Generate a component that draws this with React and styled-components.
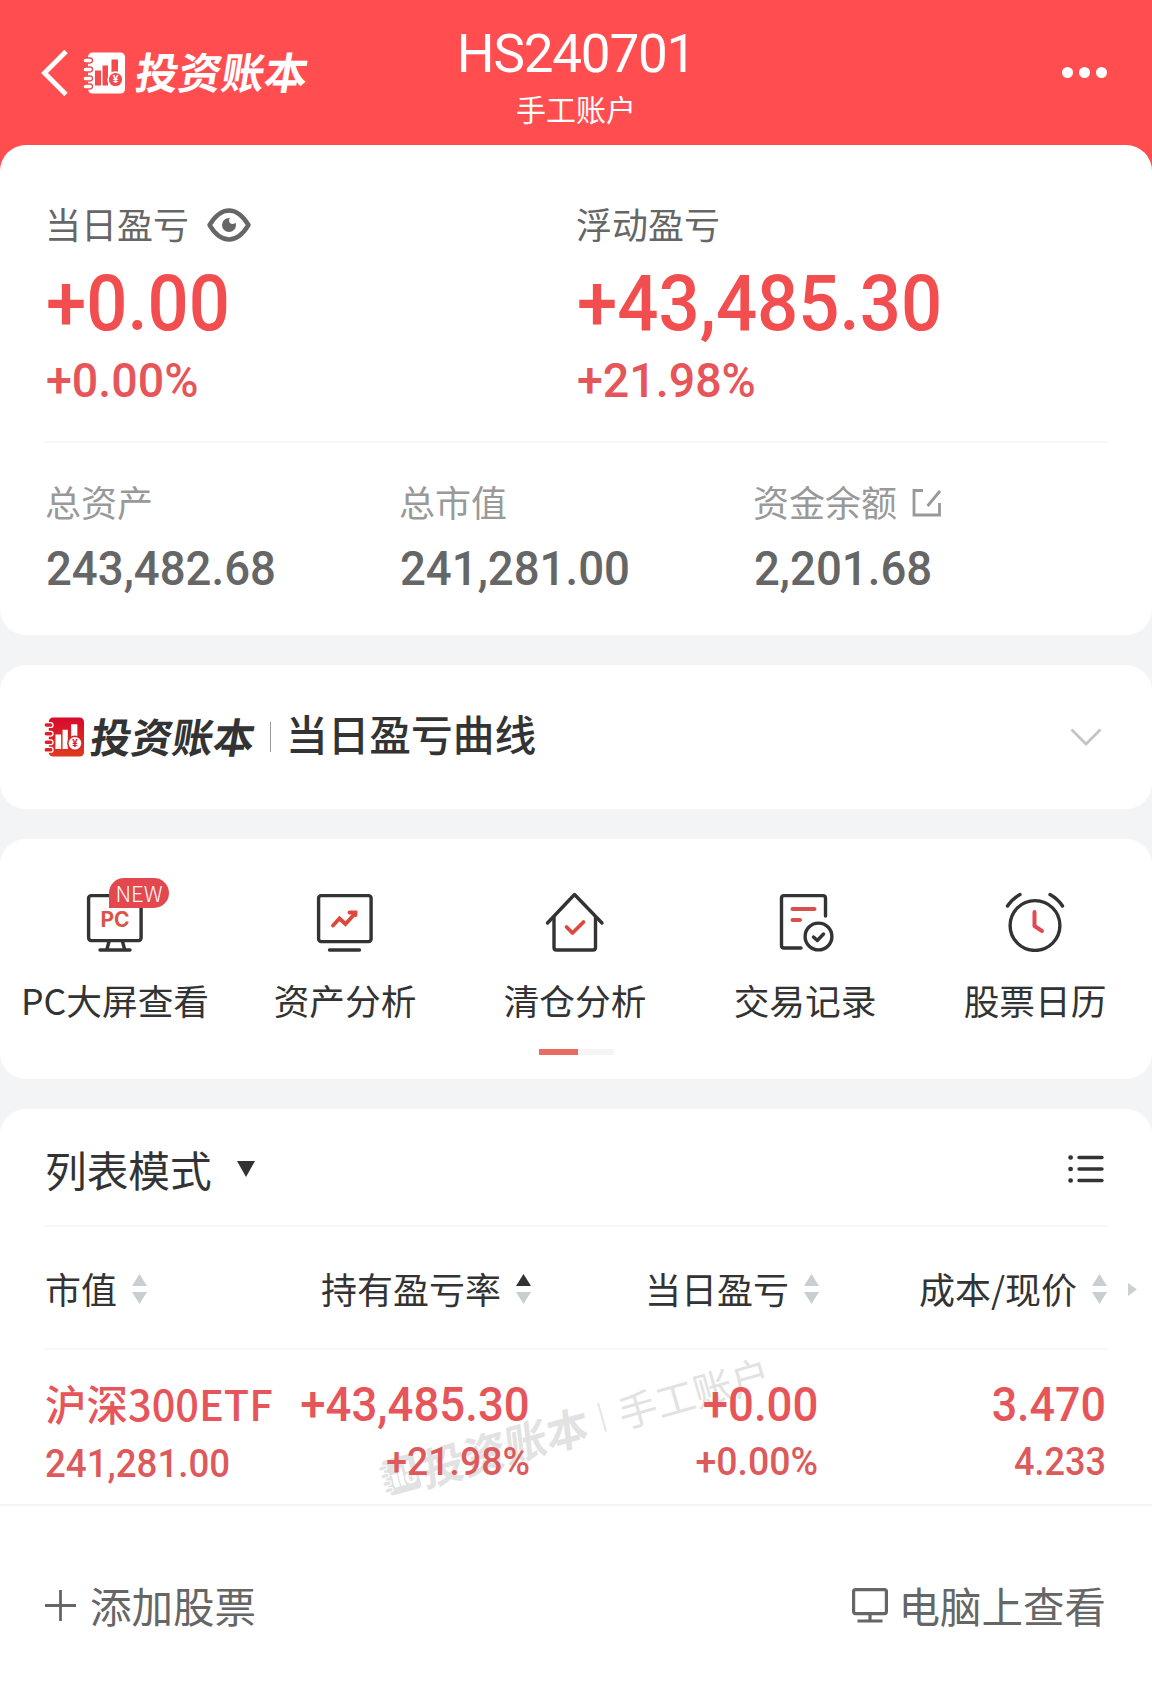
import React, { useState } from 'react'
import styled, { createGlobalStyle, css } from 'styled-components'

const cjk = `'Noto Sans CJK SC', 'Noto Sans', sans-serif`

const entries = [
  { label: 'PC大屏查看', icon: 'pc', badge: 'NEW' },
  { label: '资产分析', icon: 'asset' },
  { label: '清仓分析', icon: 'house' },
  { label: '交易记录', icon: 'record' },
  { label: '股票日历', icon: 'clock' },
]

const columns = [
  { key: 'value', label: '市值' },
  { key: 'rate', label: '持有盈亏率', sorted: 'up' },
  { key: 'today', label: '当日盈亏' },
  { key: 'cost', label: '成本/现价' },
]

const sums = [
  { label: '总资产', value: '243,482.68' },
  { label: '总市值', value: '241,281.00' },
  { label: '资金余额', value: '2,201.68', editable: true },
]

const LogoMark = ({ size, color, paper, gradient }) => (
  <svg width={size} height={size} viewBox="0 0 42 41" fill="none">
    {gradient && (
      <defs>
        <linearGradient id="mark" x1="0" y1="0" x2="0" y2="1">
          <stop offset="0" stopColor="#d80a2c" />
          <stop offset="1" stopColor="#df3a1e" />
        </linearGradient>
      </defs>
    )}
    <rect x="5" y="0" width="37" height="41" rx="4.5" fill={gradient ? 'url(#mark)' : color} />
    {[5.5, 14.5, 23.5, 31.5].map((y) => (
      <rect key={y} x="0" y={y} width="9.5" height="5" rx="2.4" fill={color} stroke={paper} strokeWidth="1.3" />
    ))}
    <path d="M12 18h6v15h-6zM19.5 13h5.5v20h-5.5zM28.5 7H35v14h-6.5z" fill={paper} />
    <circle cx="32.5" cy="27" r="8.2" fill={gradient ? '#db2626' : color} />
    <circle cx="32.5" cy="27" r="6.6" fill={paper} />
    <text x="32.5" y="30.8" fontSize="10.5" fontWeight="700" textAnchor="middle" fill={color} fontFamily="Roboto, sans-serif">¥</text>
  </svg>
)

const EntryIcon = ({ name }) => {
  switch (name) {
    case 'pc':
      return (
        <svg width="60" height="60" viewBox="0 0 60 60" fill="none" stroke="#333" strokeWidth="3.4" strokeLinecap="round">
          <rect x="3.6" y="3.6" width="52.5" height="45" rx="2.5" />
          <path d="M24 49.5L22 57M37.5 49.5L39.500 57M15 58H45" />
        </svg>
      )
    case 'asset':
      return (
        <svg width="60" height="60" viewBox="0 0 60 60" fill="none" stroke="#333" strokeWidth="3.4" strokeLinecap="round">
          <rect x="3.6" y="3.6" width="52.5" height="46" rx="2.5" />
          <path d="M14.5 58H44.5" />
          <path d="M18 33.500L24.500 26.500L30.500 32L40 21.500M34.500 20.500H40.500V23" stroke="#e0473c" strokeWidth="3.8" />
        </svg>
      )
    case 'house':
      return (
        <svg width="60" height="60" viewBox="0 0 60 60" fill="none" stroke="#333" strokeWidth="3.4" strokeLinecap="round" strokeLinejoin="round">
          <path d="M2.500 31L29.500 2.500L57 31" />
          <path d="M9 25.500V55.500Q9 58 11.500 58H48Q50.500 58 50.500 55.500V25.500" />
          <path d="M21.500 35L27.500 41L38.500 30" stroke="#e0473c" strokeWidth="3.8" />
        </svg>
      )
    case 'record':
      return (
        <svg width="60" height="60" viewBox="0 0 60 60" fill="none" stroke="#333" strokeWidth="3.4" strokeLinecap="round" strokeLinejoin="round">
          <path d="M50.500 24V6Q50.500 3.600 48 3.600H9Q6.500 3.600 6.500 6V53.500Q6.500 56 9 56H26" />
          <path d="M17.500 17H39.500M17.500 28H25" stroke="#d9504b" strokeWidth="4" />
          <circle cx="43.500" cy="44.500" r="13.400" />
          <path d="M38.500 45L42.300 48.500L48.500 42" />
        </svg>
      )
    default:
      return (
        <svg width="60" height="60" viewBox="0 0 60 60" fill="none" stroke="#333" strokeWidth="3.4" strokeLinecap="round" strokeLinejoin="round">
          <circle cx="30" cy="33.500" r="24.900" />
          <path d="M2.500 14Q7 7 15 2.500M57.500 14Q53 7 45 2.500" />
          <path d="M29.500 20V34L37 39" stroke="#e14a54" strokeWidth="4" />
        </svg>
      )
  }
}

const Sorter = ({ sorted }) => (
  <svg width="15" height="30" viewBox="0 0 15 30">
    <path d="M7.500 0L15 12H0z" fill={sorted === 'up' ? '#333' : '#c9cfd0'} />
    <path d="M0 18H15L7.500 30z" fill={sorted === 'down' ? '#333' : '#c9cfd0'} />
  </svg>
)

const App = () => {
  const [open, setOpen] = useState(false)
  return (
    <Page>
      <GlobalStyle />
      <Header>
        <Brand>
          <svg width="28" height="48" viewBox="0 0 28 48" fill="none" stroke="#fff" strokeWidth="4.8">
            <path d="M25 2.500L3.500 24L25 45.500" />
          </svg>
          <LogoMark size={42} color="#fff" paper="#f4494d" />
          <BrandName size={43}>投资账本</BrandName>
        </Brand>
        <Account>
          <AccountName>HS240701</AccountName>
          <AccountType>手工账户</AccountType>
        </Account>
        <More>
          <Dot /><Dot /><Dot />
        </More>
      </Header>

      <Summary>
        <Profits>
          <div>
            <Label>
              当日盈亏
              <svg width="44" height="34" viewBox="0 0 44 34">
                <path d="M2.500 17C8 8 14 2.500 22 2.500S36 8 41.500 17C36 26 30 31.500 22 31.500S8 26 2.500 17z" fill="none" stroke="#666" strokeWidth="4.400" strokeLinejoin="round" />
                <circle cx="22" cy="17" r="7" fill="#666" />
                <circle cx="25.500" cy="12.500" r="3.400" fill="#fff" />
              </svg>
            </Label>
            <BigNumber>+0.00</BigNumber>
            <Percent>+0.00%</Percent>
          </div>
          <div>
            <Label>浮动盈亏</Label>
            <BigNumber>+43,485.30</BigNumber>
            <Percent>+21.98%</Percent>
          </div>
        </Profits>
        <Line />
        <Sums>
          {sums.map((s) => (
            <div key={s.label}>
              <Label pale>
                {s.label}
                {s.editable && (
                  <svg width="30" height="28" viewBox="0 0 30 28" fill="none" stroke="#999" strokeWidth="2.800">
                    <path d="M11 1.500H2V26H27.500V14M15.500 17L28 2" />
                  </svg>
                )}
              </Label>
              <SumNumber>{s.value}</SumNumber>
            </div>
          ))}
        </Sums>
      </Summary>

      <Curve onClick={() => setOpen(!open)}>
        <LogoMark size={40} color="#dc2027" paper="#fff" gradient />
        <BrandName size={41} dark>投资账本</BrandName>
        <Separator />
        <CurveTitle>当日盈亏曲线</CurveTitle>
        <Chevron width="32" height="18" viewBox="0 0 32 18" open={open}>
          <path d="M1.500 1.500L16 16L30.500 1.500" fill="none" stroke="#c4c4c4" strokeWidth="2.800" />
        </Chevron>
      </Curve>

      <Entries>
        <EntryList>
          {entries.map((e) => (
            <Entry key={e.label}>
              <IconBox>
                <EntryIcon name={e.icon} />
                {e.icon === 'pc' && <PcText>PC</PcText>}
                {e.badge && <Badge>{e.badge}</Badge>}
              </IconBox>
              {e.label}
            </Entry>
          ))}
        </EntryList>
        <Pager><PagerThumb /></Pager>
      </Entries>

      <Holdings>
        <ModeBar>
          <Mode>
            列表模式
            <svg width="18" height="16" viewBox="0 0 18 16"><path d="M0 0H18L9 16z" fill="#333" /></svg>
          </Mode>
          <svg width="36" height="30" viewBox="0 0 36 30" stroke="#333" strokeWidth="3.400" strokeLinecap="round">
            <path d="M11 3.500H34M11 15H34M11 26.500H34" />
            <path d="M2.500 3.500h.2M2.500 15h.2M2.500 26.500h.2" strokeWidth="4.600" />
          </svg>
        </ModeBar>
        <Line />
        <TableHead>
          {columns.map((c) => (
            <HeadCell key={c.key}>
              {c.label}
              <Sorter sorted={c.sorted} />
            </HeadCell>
          ))}
          <ScrollHint width="9" height="13" viewBox="0 0 9 13"><path d="M0 0L9 6.500L0 13z" fill="#ccd0d1" /></ScrollHint>
        </TableHead>
        <Line />
        <Row>
          <Watermark>
            <LogoMark size={37} color="#e2e2e2" paper="#fff" />
            <MarkName>投资账本</MarkName>
            <MarkLine />
            <MarkText>手工账户</MarkText>
          </Watermark>
          <Cell>
            <StockName>沪深300ETF</StockName>
            <Minor stretch={0.945}>241,281.00</Minor>
          </Cell>
          <Cell right>
            <Major right>+43,485.30</Major>
            <Minor right stretch={0.965}>+21.98%</Minor>
          </Cell>
          <Cell right>
            <Major right>+0.00</Major>
            <Minor right stretch={0.965}>+0.00%</Minor>
          </Cell>
          <Cell right>
            <Major right stretch={0.915}>3.470</Major>
            <Minor right>4.233</Minor>
          </Cell>
        </Row>
        <Footer>
          <FooterButton gap={14}>
            <svg width="31" height="31" viewBox="0 0 31 31" stroke="#666" strokeWidth="2.800"><path d="M0 15.500H31M15.500 0V31" /></svg>
            添加股票
          </FooterButton>
          <FooterButton gap={10}>
            <svg width="36" height="35" viewBox="0 0 36 35" fill="none" stroke="#666" strokeWidth="3.200">
              <rect x="1.600" y="1.600" width="32.800" height="24" rx="2" />
              <path d="M18 26V33M5.500 33H30.500" />
            </svg>
            电脑上查看
          </FooterButton>
        </Footer>
      </Holdings>
    </Page>
  )
}

export default App

const GlobalStyle = createGlobalStyle`
* {
  box-sizing: border-box;
}
body {
  margin: 0;
  background: #fff;
}
svg {
  display: block;
  flex: none;
}
`
const Page = styled.div`
width: 1152px;
height: 1705px;
overflow: hidden;
display: flex;
flex-direction: column;
background: #f3f4f6;
font-family: ${cjk};
color: #333;
white-space: nowrap;
`
const Header = styled.header`
height: 170px;
flex: none;
padding: 0 45px 25px 41px;
display: grid;
grid-template-columns: 1fr auto 1fr;
align-items: center;
background: #ff4d50;
color: #fff;
`
const Brand = styled.div`
display: flex;
align-items: center;
svg + svg {
  margin-left: 14px;
}
`
const BrandName = styled.div.withConfig({ shouldForwardProp: (p) => p !== 'dark' })`
font-size: ${(p) => p.size}px;
line-height: 44px;
font-weight: 700;
color: ${(p) => (p.dark ? '#333' : '#fff')};
margin-left: ${(p) => (p.dark ? 7 : 11)}px;
padding-bottom: 5px;
transform: skewX(-9deg);
`
const Account = styled.div`
display: flex;
flex-direction: column;
align-items: center;
padding: 7px 0 0 4px;
`
const AccountName = styled.div`
font-family: Roboto, sans-serif;
font-size: 53px;
line-height: 56px;
letter-spacing: -1.2px;
`
const AccountType = styled.div`
font-size: 30px;
line-height: 36px;
margin-top: 8px;
`
const More = styled.div`
display: flex;
justify-content: flex-end;
gap: 6px;
`
const Dot = styled.span`
width: 11px;
height: 11px;
border-radius: 50%;
background: #fff;
`
const Card = styled.section`
background: #fff;
border-radius: 26px;
flex: none;
margin-bottom: 30px;
`
const Summary = styled(Card)`
height: 490px;
margin-top: -25px;
padding: 58px 44px 0;
`
const Profits = styled.div`
display: grid;
grid-template-columns: 531px 1fr;
padding: 0 0 35px 1px;
`
const Label = styled.div.withConfig({ shouldForwardProp: (p) => p !== 'pale' })`
display: flex;
align-items: center;
gap: ${(p) => (p.pale ? 15 : 18)}px;
font-size: 36px;
line-height: 40px;
color: ${(p) => (p.pale ? '#999' : '#666')};
svg {
  margin-top: 4px;
}
`
/* digits are set slightly condensed */
const digits = css`
font-family: Roboto, sans-serif;
font-weight: 500;
transform: scaleX(${(p) => p.stretch || 0.93});
transform-origin: ${(p) => (p.right ? 'right' : 'left')} center;
`
const BigNumber = styled.div`
${digits}
font-size: 78px;
line-height: 80px;
margin-top: 21px;
padding-left: 1px;
color: #f24e50;
`
const Percent = styled.div`
${digits}
font-size: 48.5px;
line-height: 50px;
margin-top: 12px;
padding-left: 1px;
transform: scaleX(0.96);
color: #e6555a;
`
const Line = styled.div`
height: 2px;
background: #f7f7f7;
`
const Sums = styled.div`
display: grid;
grid-template-columns: 354px 354px 1fr;
padding: 38px 0 0 1px;
`
const SumNumber = styled.div`
${digits}
font-size: 49px;
line-height: 50px;
margin-top: 23px;
padding-left: 1px;
color: #666;
`
const Curve = styled(Card)`
height: 144px;
padding: 0 50px 0 44px;
display: flex;
align-items: center;
`
const Separator = styled.div`
width: 1px;
height: 30px;
margin: 0 15px 0 15px;
background: #999;
`
const CurveTitle = styled.div`
font-size: 41.7px;
line-height: 48px;
font-weight: 500;
padding-bottom: 8px;
`
const Chevron = styled.svg.withConfig({ shouldForwardProp: (p) => p !== 'open' })`
margin-left: auto;
transform: ${(p) => (p.open ? 'rotate(180deg)' : 'none')};
`
const Entries = styled(Card)`
height: 240px;
padding-top: 53px;
`
const EntryList = styled.div`
display: grid;
grid-template-columns: repeat(5, 230px);
`
const Entry = styled.div`
display: flex;
flex-direction: column;
align-items: center;
gap: 28px;
font-size: 35.7px;
line-height: 40px;
`
const IconBox = styled.div`
position: relative;
width: 60px;
height: 60px;
`
const PcText = styled.span`
position: absolute;
top: 16px;
left: 0;
width: 100%;
text-align: center;
font-family: Inter, sans-serif;
font-size: 21px;
line-height: 24px;
font-weight: 700;
color: #dd5347;
`
const Badge = styled.span`
position: absolute;
left: 24px;
top: -14px;
width: 60px;
height: 30px;
border-radius: 15px 15px 15px 0;
background: #e4484f;
color: #fff;
font-size: 22px;
font-weight: 300;
line-height: 28px;
text-align: center;
`
const Pager = styled.div`
width: 75px;
height: 6px;
margin: 29px auto 0;
background: #f5f5f5;
`
const PagerThumb = styled.div`
width: 39px;
height: 6px;
background: #e96b61;
`
const Holdings = styled(Card)`
flex: 1;
margin: 0;
padding: 0 44px;
border-radius: 26px 26px 0 0;
`
const ModeBar = styled.div`
height: 116px;
padding: 3px 4px 0 1px;
display: flex;
align-items: center;
justify-content: space-between;
`
const Mode = styled.div`
display: flex;
align-items: center;
gap: 25px;
font-size: 41.7px;
line-height: 48px;
`
const TableHead = styled.div`
height: 121px;
display: grid;
grid-template-columns: 200px 287px 288px 288px;
align-items: center;
position: relative;
`
const HeadCell = styled.div`
display: flex;
align-items: center;
justify-content: flex-end;
gap: 15px;
font-size: 36px;
line-height: 40px;
&:first-child {
  justify-content: flex-start;
  padding-left: 1px;
}
svg {
  margin-top: 3px;
}
`
const ScrollHint = styled.svg`
position: absolute;
right: -29px;
top: 56px;
`
const Row = styled.div`
position: relative;
height: 156px;
margin: 0 -44px;
padding: 29px 46px 0 44px;
display: grid;
grid-template-columns: 200px 286px 288px 288px;
border-bottom: 2px solid #f5f5f5;
`
const Cell = styled.div.withConfig({ shouldForwardProp: (p) => p !== 'right' })`
position: relative;
display: flex;
flex-direction: column;
gap: ${(p) => (p.right ? 8 : 12)}px;
align-items: ${(p) => (p.right ? 'flex-end' : 'flex-start')};
padding-left: ${(p) => (p.right ? 0 : 1)}px;
`
const StockName = styled.div`
font-size: 41.5px;
line-height: 52px;
height: 52px;
margin-top: -2px;
font-weight: 500;
color: #e6555a;
`
const Major = styled.div`
${digits}
font-size: 49px;
line-height: 52px;
color: #e6555a;
`
const Minor = styled.div`
${digits}
font-size: 38.8px;
line-height: 46px;
color: #dd5a5c;
`
const Watermark = styled.div`
position: absolute;
left: 374px;
top: 50px;
width: 408px;
display: flex;
align-items: center;
color: #e2e2e2;
transform: rotate(-15.8deg);
`
const MarkName = styled.div`
font-size: 43px;
line-height: 48px;
font-weight: 700;
margin-left: 5px;
transform: skewX(-9deg);
`
const MarkLine = styled.div`
width: 2px;
height: 30px;
margin: 0 16px 0 14px;
background: #e6e6e6;
`
const MarkText = styled.div`
font-size: 39px;
line-height: 48px;
`
const Footer = styled.div`
display: flex;
justify-content: space-between;
padding: 73px 2px 0 1px;
`
const FooterButton = styled.div`
display: flex;
align-items: center;
gap: ${(p) => p.gap}px;
font-size: 41.5px;
line-height: 52px;
color: #666;
`
